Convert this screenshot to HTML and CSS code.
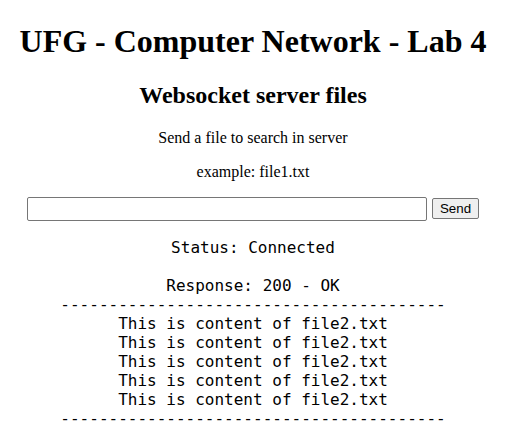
FILE: index.html
```html
<!DOCTYPE html>
<html>
<head>
<meta charset="utf-8">
<title>UFG - Computer Network - Lab 4</title>
<link rel="stylesheet" href="styles.css">
</head>
<body>
<div class="page">
<h1 class="title">UFG - Computer Network - Lab 4</h1>
<h2 class="subtitle">Websocket server files</h2>
<p class="hint">Send a file to search in server</p>
<p class="hint">example: file1.txt</p>
<div class="form-row">
<input class="file-input" type="text">
<button class="send-btn">Send</button>
</div>
<pre class="output">Status: Connected

Response: 200 - OK
----------------------------------------
This is content of file2.txt
This is content of file2.txt
This is content of file2.txt
This is content of file2.txt
This is content of file2.txt
----------------------------------------
</pre>
</div>
</body>
</html>
```
FILE: styles.css
```css
html, body {
  margin: 0;
  padding: 0;
  background: #fff;
}
body {
  font-family: "Liberation Serif", serif;
  color: #000;
  padding-top: 2px;
}
.page {
  margin: 8px 23px 8px 8px;
  text-align: center;
}
.title {
  font-size: 32px;
  font-weight: bold;
  margin: 21.44px 0;
}
.subtitle {
  font-size: 24px;
  font-weight: bold;
  margin: 19.92px 0;
}
.hint {
  font-size: 16px;
  margin: 16px 0;
}
.form-row {
  margin: 16px 0;
  padding-bottom: 1px;
  display: flex;
  justify-content: center;
  align-items: center;
  gap: 5px;
}
.file-input {
  width: 400px;
  height: 24px;
  box-sizing: border-box;
  font-family: "Liberation Sans", Arial, sans-serif;
  font-size: 13.333px;
  padding: 1px 2px;
  border: 1px solid #767676;
  border-radius: 2px;
  margin: 0;
}
.send-btn {
  font-family: "Liberation Sans", Arial, sans-serif;
  font-size: 13.333px;
  padding: 1px 7px;
  border: 1px solid #767676;
  border-radius: 2px;
  background: #efefef;
  color: #000;
  height: 21px;
  box-sizing: border-box;
  margin: 0;
}
.output {
  font-family: "DejaVu Sans Mono", monospace;
  font-size: 16px;
  line-height: 19px;
  margin: 16px 0;
  text-align: center;
}
```
